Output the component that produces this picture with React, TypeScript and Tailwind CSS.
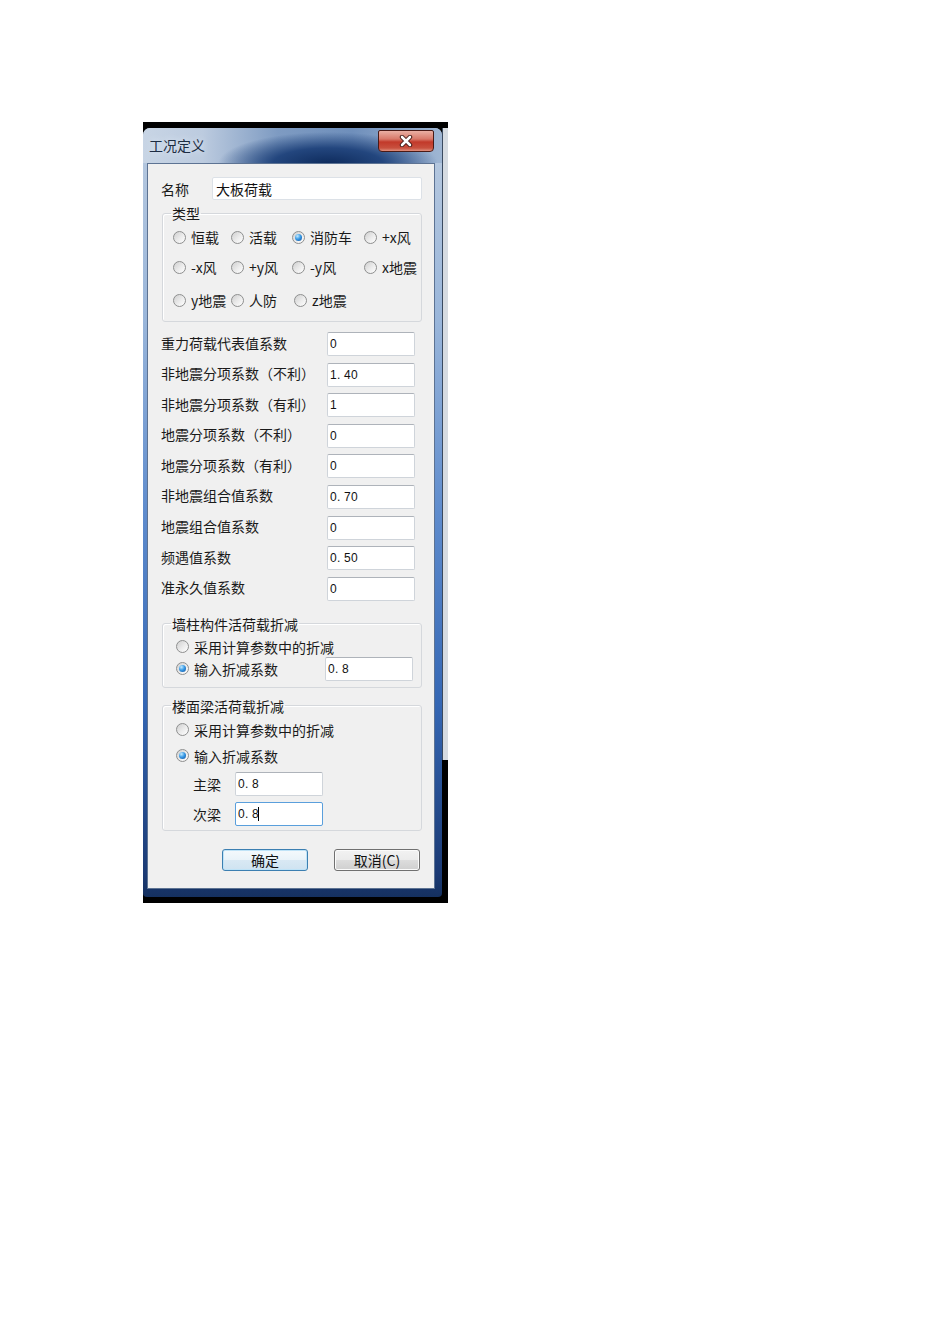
import React from "react";

const cjk = "font-['Noto_Sans_CJK_SC','Noto_Sans',sans-serif]";

function Radio({ checked = false }: { checked?: boolean }) {
  return (
    <span className="w-[13px] h-[13px] rounded-full border border-[#8e8f8f] bg-[linear-gradient(135deg,#cfcfcf_0%,#ececec_55%,#ffffff_100%)] flex items-center justify-center shrink-0">
      {checked && (
        <span className="w-[7px] h-[7px] rounded-full bg-[radial-gradient(circle_at_35%_30%,#c4ebff_0%,#3a9be6_45%,#0b4c9c_100%)]" />
      )}
    </span>
  );
}

function RadioItem({ label, checked, className = "" }: { label: string; checked?: boolean; className?: string }) {
  return (
    <div className={`flex items-center gap-[5px] h-[20px] shrink-0 ${className}`}>
      <Radio checked={checked} />
      <span className="text-[14px] leading-[16px] text-[#1a1a1a] whitespace-nowrap">{label}</span>
    </div>
  );
}

// half-width digits as in the old dialog font: every char takes the same cell
function Num({ value }: { value: string }) {
  return (
    <span className="flex font-['Liberation_Sans',sans-serif] text-[12px] leading-[14px] text-[#111]">
      {value.split("").map((c, i) => (
        <span key={i} className="w-[7px] text-left">
          {c}
        </span>
      ))}
    </span>
  );
}

function Field({ value, w = "w-[88px]", focused = false }: { value: string; w?: string; focused?: boolean }) {
  return (
    <div
      className={`${w} h-[24px] bg-white rounded-[2px] flex items-center pl-[2px] shrink-0 border ${
        focused ? "border-[#5a9fdc]" : "border-[#cfd4da] border-t-[#aeb3ba]"
      }`}
    >
      <Num value={value} />
      {focused && <span className="-ml-[1px] w-[1px] h-[14px] bg-black" />}
    </div>
  );
}

function Group({ title, children, className = "", inner = "" }: { title: string; children: React.ReactNode; className?: string; inner?: string }) {
  return (
    <fieldset className={`ml-[1px] w-[260px] border border-[#d5d8dc] rounded-[3px] shadow-[inset_1px_1px_0_#ffffff] ${className}`}>
      <legend className="ml-[8px] px-[1px] text-[14px] leading-[16px] text-[#1a1a1a]">{title}</legend>
      <div className={inner}>{children}</div>
    </fieldset>
  );
}

const coefs = [
  ["重力荷载代表值系数", "0"],
  ["非地震分项系数（不利）", "1.40"],
  ["非地震分项系数（有利）", "1"],
  ["地震分项系数（不利）", "0"],
  ["地震分项系数（有利）", "0"],
  ["非地震组合值系数", "0.70"],
  ["地震组合值系数", "0"],
  ["频遇值系数", "0.50"],
  ["准永久值系数", "0"],
];

export default function App() {
  return (
    <div className={`min-h-[1344px] bg-white pt-[122px] pl-[143px] ${cjk}`}>
      <div className="w-[305px] h-[781px] bg-black flex">
        <div className="mt-[6px] w-[299px] h-[769px] rounded-t-[7px] rounded-b-[4px] bg-[linear-gradient(to_bottom,#b9cadf_0%,#9ab6da_25%,#5f8ccd_50%,#3567b4_75%,#1b3a74_97%,#15305f_100%)] flex flex-col overflow-hidden">
          {/* title bar */}
          <div className="h-[35px] flex justify-between items-start bg-[radial-gradient(ellipse_110px_32px_at_185px_36px,#0e2b5c_0%,#23467e_50%,transparent_100%),linear-gradient(to_right,#c8d5e5_0%,#bccbdf_20%,#7e9bc2_45%,#6f8fbb_70%,#9fb6d3_100%)]">
            <div className="pl-[6px] pt-[9px] text-[14px] leading-[16px] text-[#1c2c42] [text-shadow:0_0_6px_#e8f0fa]">
              工况定义
            </div>
            <div className="mt-[2px] mr-[8px] w-[56px] h-[22px] rounded-b-[4px] rounded-t-[2px] border border-[#4a1a16] bg-[linear-gradient(to_bottom,#eab0a4_0%,#d8796a_40%,#c2392a_55%,#c8503e_85%,#e0907e_100%)] flex items-center justify-center">
              <svg width="14" height="12" viewBox="0 0 14 12">
                <path d="M3 2 L11 10 M11 2 L3 10" stroke="#3a1410" strokeWidth="4.4" strokeLinecap="round" />
                <path d="M3 2 L11 10 M11 2 L3 10" stroke="#ffffff" strokeWidth="2.6" strokeLinecap="round" />
              </svg>
            </div>
          </div>

          {/* client */}
          <div className="ml-[4px] w-[288px] h-[726px] bg-[#f0f0f0] border border-[#5d7393] pl-[13px] pt-[13px] flex flex-col">
            <div className="flex items-center h-[23px]">
              <span className="w-[51px] text-[14px] leading-[16px] text-[#1a1a1a]">名称</span>
              <div className="w-[210px] h-[23px] bg-white border border-[#dce1e7] rounded-[2px] flex items-center pl-[3px]">
                <span className="text-[14px] leading-[16px] text-[#111]">大板荷载</span>
              </div>
            </div>

            <Group title="类型" className="mt-[5px] pb-[11px]" inner="pl-[10px]">
              <div className="flex mt-[6px]">
                <RadioItem label="恒载" className="w-[58px]" />
                <RadioItem label="活载" className="w-[61px]" />
                <RadioItem label="消防车" checked className="w-[72px]" />
                <RadioItem label="+x风" />
              </div>
              <div className="flex mt-[10px]">
                <RadioItem label="-x风" className="w-[58px]" />
                <RadioItem label="+y风" className="w-[61px]" />
                <RadioItem label="-y风" className="w-[72px]" />
                <RadioItem label="x地震" />
              </div>
              <div className="flex mt-[13px]">
                <RadioItem label="y地震" className="w-[58px]" />
                <RadioItem label="人防" className="w-[63px]" />
                <RadioItem label="z地震" />
              </div>
            </Group>

            <div className="mt-[10px] flex flex-col gap-[6.6px]">
              {coefs.map(([label, value]) => (
                <div key={label} className="flex items-center h-[24px]">
                  <span className="w-[166px] text-[14px] leading-[16px] text-[#1a1a1a] -mt-[3px] whitespace-nowrap">{label}</span>
                  <Field value={value} />
                </div>
              ))}
            </div>

            <Group title="墙柱构件活荷载折减" className="mt-[15px] pb-[6px]" inner="pl-[13px]">
              <RadioItem label="采用计算参数中的折减" className="mt-[5px] h-[18px]" />
              <div className="flex items-center h-[24px]">
                <RadioItem label="输入折减系数" checked className="w-[149px]" />
                <Field value="0.8" />
              </div>
            </Group>

            <Group title="楼面梁活荷载折减" className="mt-[10px] pb-[4px]" inner="pl-[13px]">
              <RadioItem label="采用计算参数中的折减" className="mt-[6px] h-[18px]" />
              <RadioItem label="输入折减系数" checked className="mt-[6px] h-[18px]" />
              <div className="flex items-center h-[24px] mt-[6px] pl-[17px]">
                <span className="w-[42px] text-[14px] leading-[16px] text-[#1a1a1a]">主梁</span>
                <Field value="0.8" />
              </div>
              <div className="flex items-center h-[24px] mt-[6px] pl-[17px]">
                <span className="w-[42px] text-[14px] leading-[16px] text-[#1a1a1a]">次梁</span>
                <Field value="0.8" focused />
              </div>
            </Group>

            <div className="mt-[18px] ml-[61px] flex gap-[26px]">
              <div className="w-[86px] h-[22px] rounded-[3px] border border-[#3c7fb1] shadow-[inset_0_0_0_1px_#bfe3f7] bg-[linear-gradient(to_bottom,#f4f9fc_0%,#e9f3f9_50%,#d9e9f4_51%,#cfe3f1_100%)] flex items-center justify-center text-[14px] leading-[16px] text-[#111]">
                确定
              </div>
              <div className="w-[86px] h-[22px] rounded-[3px] border border-[#707070] shadow-[inset_0_0_0_1px_#fbfbfb] bg-[linear-gradient(to_bottom,#f2f2f2_0%,#ebebeb_50%,#dddddd_51%,#cfcfcf_100%)] flex items-center justify-center text-[14px] leading-[16px] text-[#111]">
                取消(C)
              </div>
            </div>
          </div>
        </div>
        <div className="w-[6px] flex flex-col">
          <div className="h-[6px]" />
          <div className="h-[632px] border-l border-[#3a4a60] bg-[#d6dbe1]" />
        </div>
      </div>
    </div>
  );
}
